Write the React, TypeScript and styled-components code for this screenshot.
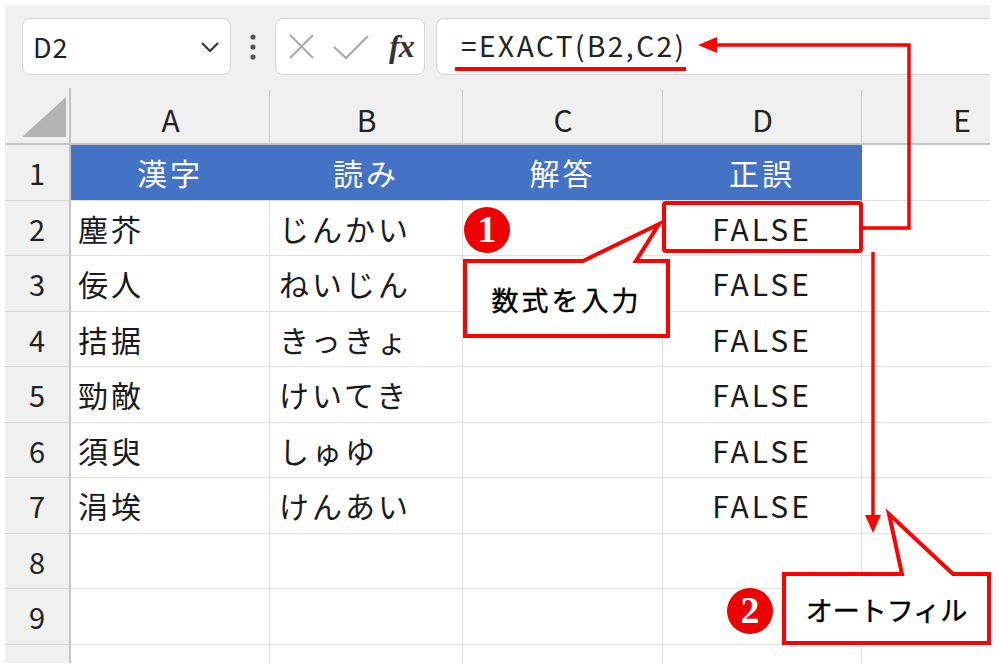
import React from "react";
import styled, { createGlobalStyle } from "styled-components";

const Global = createGlobalStyle`
  html, body { margin: 0; padding: 0; background: #ffffff; }
  body { font-family: "Noto Sans CJK JP", "Noto Sans", sans-serif; }
  * { box-sizing: border-box; }
`;

const FONT = `"Noto Sans CJK JP", "Noto Sans", sans-serif`;
const RED = "#ff0000";

const Frame = styled.div`
  position: relative;
  width: 1000px;
  height: 672px;
  padding: 5px 10px 9px 5px;
  background: #ffffff;
  overflow: hidden;
`;

const Sheet = styled.div`
  height: 658px;
  display: flex;
  flex-direction: column;
  overflow: hidden;
  background: #ffffff;
`;

const Toolbar = styled.div`
  height: 83px;
  flex: none;
  display: flex;
  align-items: flex-start;
  padding: 13px 0 0 17px;
  background: #f0f0f0;
`;

const Box = styled.div`
  height: 57px;
  background: #ffffff;
  border: 1px solid #d6d6d6;
  border-radius: 8px;
  display: flex;
  align-items: center;
`;

const NameBox = styled(Box)`
  width: 209px;
  padding-left: 10px;
  justify-content: space-between;
  padding-right: 10px;
`;

const CellRef = styled.span`
  font-family: ${FONT};
  font-size: 27px;
  color: #222;
  letter-spacing: 1px;
`;

const DotsWrap = styled.div`
  width: 44px;
  height: 57px;
  display: flex;
  align-items: center;
  justify-content: center;
`;

const FxBox = styled(Box)`
  width: 150px;
`;

const FxLabel = styled.span`
  font-family: "Liberation Serif", "DejaVu Serif", serif;
  font-style: italic;
  font-weight: bold;
  font-size: 32px;
  color: #333;
  margin-left: 5px;
  letter-spacing: -1px;
`;

const FormulaBox = styled(Box)`
  flex: 1;
  margin-left: 11px;
  border-right: none;
  border-radius: 8px 0 0 8px;
  padding-left: 24px;
`;

const FormulaText = styled.span`
  font-family: ${FONT};
  font-size: 28px;
  color: #222;
  letter-spacing: 2.5px;
  margin-top: -4px;
`;

const Grid = styled.div`
  display: grid;
  grid-template-columns: 66px 199px 193px 200px 199px 200px;
  grid-template-rows: 57px repeat(10, 55.5px);
  flex: none;
`;

const Corner = styled.div`
  background: #f0f0f0;
  border-right: 2px solid #c3c3c3;
  border-bottom: 2px solid #c6c6c6;
  display: flex;
  align-items: flex-end;
  justify-content: flex-end;
  padding: 0 3px 6px 0;
`;

const ColHead = styled.div`
  background: #f0f0f0;
  border-bottom: 2px solid #c6c6c6;
  position: relative;
  display: flex;
  align-items: center;
  justify-content: center;
  font-family: ${FONT};
  font-size: 30px;
  color: #222;
  padding-top: 6px;
  &::after {
    content: "";
    position: absolute;
    right: 0;
    top: 2px;
    bottom: 0;
    width: 1px;
    background: #cdcdcd;
  }
`;

const RowHead = styled.div`
  background: #f0f0f0;
  border-right: 2px solid #c3c3c3;
  border-bottom: 1px solid #d6d6d6;
  display: flex;
  align-items: center;
  justify-content: center;
  font-family: ${FONT};
  font-size: 29px;
  color: #222;
`;

const Cell = styled.div<{ $align: "left" | "center"; $pad: number; $title?: boolean }>`
  display: flex;
  align-items: center;
  justify-content: ${(p) => (p.$align === "center" ? "center" : "flex-start")};
  padding-left: ${(p) => p.$pad}px;
  font-family: ${FONT};
  font-size: 30px;
  letter-spacing: 3px;
  white-space: nowrap;
  color: ${(p) => (p.$title ? "#ffffff" : "#1a1a1a")};
  background: ${(p) => (p.$title ? "#4472c4" : "#ffffff")};
  border-right: 1px solid ${(p) => (p.$title ? "#4472c4" : "#e1e1e1")};
  border-bottom: 1px solid #e1e1e1;
`;

const Overlay = styled.svg`
  position: absolute;
  left: 0;
  top: 0;
  width: 1000px;
  height: 672px;
  pointer-events: none;
`;

const Badge = styled.div<{ $x: number; $y: number }>`
  position: absolute;
  left: ${(p) => p.$x}px;
  top: ${(p) => p.$y}px;
  width: 46px;
  height: 46px;
  border-radius: 50%;
  background: #ee0000;
  color: #ffffff;
  display: flex;
  align-items: center;
  justify-content: center;
  font-family: "Liberation Serif", "DejaVu Serif", serif;
  font-weight: bold;
  font-size: 38px;
  line-height: 1;
  padding-bottom: 2px;
`;

const CalloutLabel = styled.div<{ $x: number; $y: number; $w: number; $h: number; $spacing: number }>`
  position: absolute;
  left: ${(p) => p.$x}px;
  top: ${(p) => p.$y}px;
  width: ${(p) => p.$w}px;
  height: ${(p) => p.$h}px;
  display: flex;
  align-items: center;
  justify-content: center;
  font-family: ${FONT};
  font-weight: 400;
  font-size: 27px;
  letter-spacing: ${(p) => p.$spacing}px;
  color: #000;
  -webkit-text-stroke: 0.4px #000;
`;

type Row = { kanji: string; yomi: string; ans: string; res: string };

const rows: Row[] = [
  { kanji: "塵芥", yomi: "じんかい", ans: "", res: "FALSE" },
  { kanji: "佞人", yomi: "ねいじん", ans: "", res: "FALSE" },
  { kanji: "拮据", yomi: "きっきょ", ans: "", res: "FALSE" },
  { kanji: "勁敵", yomi: "けいてき", ans: "", res: "FALSE" },
  { kanji: "須臾", yomi: "しゅゆ", ans: "", res: "FALSE" },
  { kanji: "涓埃", yomi: "けんあい", ans: "", res: "FALSE" },
  { kanji: "", yomi: "", ans: "", res: "" },
  { kanji: "", yomi: "", ans: "", res: "" },
  { kanji: "", yomi: "", ans: "", res: "" },
];

export default function App() {
  return (
    <>
      <Global />
      <Frame>
        <Sheet>
          <Toolbar>
            <NameBox>
              <CellRef>D2</CellRef>
              <svg width="20" height="12" viewBox="0 0 20 12">
                <polyline points="2,2 10,10 18,2" fill="none" stroke="#333" strokeWidth="2" />
              </svg>
            </NameBox>
            <DotsWrap>
              <svg width="8" height="28" viewBox="0 0 8 28">
                <circle cx="4" cy="4" r="2.6" fill="#555" />
                <circle cx="4" cy="14" r="2.6" fill="#555" />
                <circle cx="4" cy="24" r="2.6" fill="#555" />
              </svg>
            </DotsWrap>
            <FxBox>
              <svg width="100" height="40" viewBox="0 0 100 40" style={{ marginLeft: 8 }}>
                <line x1="6" y1="8" x2="29" y2="31" stroke="#a8a8a8" strokeWidth="2" />
                <line x1="29" y1="8" x2="6" y2="31" stroke="#a8a8a8" strokeWidth="2" />
                <polyline points="50,20 62,31 84,9" fill="none" stroke="#a8a8a8" strokeWidth="2" />
              </svg>
              <FxLabel>fx</FxLabel>
            </FxBox>
            <FormulaBox>
              <FormulaText>=EXACT(B2,C2)</FormulaText>
            </FormulaBox>
          </Toolbar>
          <Grid>
            <Corner>
              <svg width="44" height="40" viewBox="0 0 44 40">
                <polygon points="0,40 44,40 44,0" fill="#b4b4b4" />
              </svg>
            </Corner>
            {["A", "B", "C", "D", "E"].map((c) => (
              <ColHead key={c}>{c}</ColHead>
            ))}
            <RowHead>1</RowHead>
            <Cell $align="center" $pad={0} $title>漢字</Cell>
            <Cell $align="center" $pad={0} $title>読み</Cell>
            <Cell $align="center" $pad={0} $title>解答</Cell>
            <Cell $align="center" $pad={0} $title>正誤</Cell>
            <Cell $align="left" $pad={0} />
            {rows.map((r, i) => (
              <React.Fragment key={i}>
                <RowHead>{i + 2}</RowHead>
                <Cell $align="left" $pad={7}>{r.kanji}</Cell>
                <Cell $align="left" $pad={9}>{r.yomi}</Cell>
                <Cell $align="left" $pad={7}>{r.ans}</Cell>
                <Cell $align="center" $pad={0}>{r.res}</Cell>
                <Cell $align="left" $pad={0} />
              </React.Fragment>
            ))}
          </Grid>
        </Sheet>

        <Overlay viewBox="0 0 1000 672">
          <line x1="455" y1="69" x2="686" y2="69" stroke={RED} strokeWidth="4" />
          <polyline points="862,228 909,228 909,45 714,45" fill="none" stroke={RED} strokeWidth="3.5" />
          <polygon points="698,45 717,37 717,53" fill={RED} />
          <rect x="664" y="203" width="197" height="48" rx="2" fill="none" stroke={RED} strokeWidth="4" />
          <line x1="873" y1="252" x2="873" y2="518" stroke={RED} strokeWidth="3.5" />
          <polygon points="865,515 881,515 873,533" fill={RED} />
          <path
            d="M465,261 L583,261 L659,224 L636,261 L668,261 L668,336 L465,336 Z"
            fill="#ffffff"
            stroke={RED}
            strokeWidth="4"
            strokeLinejoin="miter"
          />
          <path
            d="M784,574 L902,574 L889,514 L953,574 L989,574 L989,643 L784,643 Z"
            fill="#ffffff"
            stroke={RED}
            strokeWidth="4"
            strokeLinejoin="miter"
          />
        </Overlay>
        <Badge $x={464} $y={207}>1</Badge>
        <Badge $x={727} $y={588}>2</Badge>
        <CalloutLabel $x={465} $y={262} $w={203} $h={75} $spacing={3}>数式を入力</CalloutLabel>
        <CalloutLabel $x={784} $y={575} $w={205} $h={69} $spacing={0}>オートフィル</CalloutLabel>
      </Frame>
    </>
  );
}
